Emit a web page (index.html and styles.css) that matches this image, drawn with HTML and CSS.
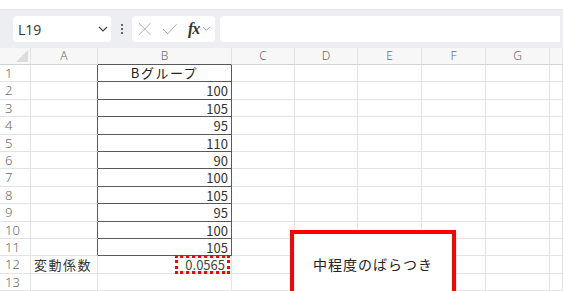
FILE: index.html
```html
<!DOCTYPE html>
<html lang="ja">
<head>
    <meta charset="UTF-8">
    <meta name="viewport" content="width=device-width, initial-scale=1.0">
    <title>変動係数</title>
    <link rel="stylesheet" href="styles.css">
</head>
<body>
    <div class="toolbar">
        <div class="name-box">
            <span>L19</span>
            <svg class="chevron" width="10" height="6" viewBox="0 0 10 6"><path d="M1 1l4 4 4-4" fill="none" stroke="#444" stroke-width="1.2"/></svg>
        </div>
        <div class="grip">
            <svg width="4" height="12" viewBox="0 0 4 12"><circle cx="2" cy="2" r="1.1" fill="#444"/><circle cx="2" cy="6" r="1.1" fill="#444"/><circle cx="2" cy="10" r="1.1" fill="#444"/></svg>
        </div>
        <div class="fx-box">
            <svg width="14" height="14" viewBox="0 0 14 14"><path d="M1 1l12 12M13 1L1 13" fill="none" stroke="#aaa" stroke-width="1"/></svg>
            <svg width="16" height="12" viewBox="0 0 16 12"><path d="M1 6l5 5L15 1" fill="none" stroke="#aaa" stroke-width="1"/></svg>
            <span class="fx">fx</span>
            <svg width="9" height="6" viewBox="0 0 9 6"><path d="M1 1l3.5 3.5L8 1" fill="none" stroke="#999" stroke-width="1"/></svg>
        </div>
        <div class="formula-bar"></div>
    </div>

    <div class="sheet">
        <div class="grid" id="grid"></div>
        <div class="cell-shape">0.0565</div>
        <div class="note">中程度のばらつき</div>
    </div>

    <script>
        const columns = ['A', 'B', 'C', 'D', 'E', 'F', 'G', ''];
        const values = [100, 105, 95, 110, 90, 100, 105, 95, 100, 105];
        const grid = document.getElementById('grid');

        function addCell(className, text) {
            const cell = document.createElement('div');
            cell.className = 'cell ' + className;
            cell.textContent = text || '';
            grid.appendChild(cell);
            return cell;
        }

        // header row
        addCell('corner');
        columns.forEach(col => addCell('col-head' + (col === 'B' ? ' framed-top' : ''), col));

        // rows 1-13
        for (let r = 1; r <= 13; r++) {
            const framed = r <= 11;
            addCell('row-head', r);
            addCell(framed ? 'left-of-frame' : (r === 12 ? 'label' : ''), r === 12 ? '変動係数' : '');
            let text = '';
            let cls = '';
            if (r === 1) { text = 'Bグループ'; cls = 'framed title'; }
            else if (framed) { text = values[r - 2]; cls = 'framed number'; }
            addCell(cls, text);
            for (let c = 2; c < columns.length; c++) addCell('');
        }
    </script>
</body>
</html>
```
FILE: styles.css
```css
:root {
    --grid-line: #e3e3e3;
    --frame-line: #5a5a5a;
    --band-color: #eceef1;
    --head-text: #6a6a6a;
    --cell-text: #333333;
    --accent-red: #ff0000;
}
body {
    margin: 0;
    background-color: #ffffff;
    font-family: "Noto Sans CJK JP", "Noto Sans", sans-serif;
    color: var(--cell-text);
    overflow: hidden;
}
.toolbar {
    margin-top: 9px;
    height: 39px;
    box-sizing: border-box;
    padding: 6px 3px 6px 13px;
    background-color: var(--band-color);
    border-top: 1px solid #e2e4e8;
    display: flex;
    align-items: stretch;
}
.name-box {
    width: 98px;
    box-sizing: border-box;
    background-color: #ffffff;
    border-radius: 4px;
    display: flex;
    align-items: center;
    justify-content: space-between;
    padding: 0 3px 0 5px;
    font-family: "Open Sans", "Noto Sans", sans-serif;
    font-size: 14px;
    color: #333;
}
.grip {
    width: 21px;
    display: flex;
    align-items: center;
    justify-content: center;
}
.fx-box {
    width: 83px;
    box-sizing: border-box;
    background-color: #ffffff;
    border-radius: 4px;
    display: flex;
    align-items: center;
    padding: 0 4px 0 6px;
    gap: 10px;
}
.fx-box svg:last-child {
    margin-left: -7px;
}
.fx {
    font-family: "Liberation Serif", "DejaVu Serif", serif;
    font-style: italic;
    font-weight: bold;
    font-size: 16px;
    color: #333;
    letter-spacing: -1px;
    margin-left: 1px;
}
.formula-bar {
    flex: 1;
    margin-left: 5px;
    background-color: #ffffff;
    border-radius: 4px 0 0 4px;
}
.sheet {
    position: relative;
}
.grid {
    display: grid;
    grid-template-columns: 31px 67px 134px 63px 63px 64px 64px 64px 1fr;
    grid-template-rows: 17px repeat(13, 17.4px);
}
.cell {
    box-sizing: border-box;
    border-right: 1px solid var(--grid-line);
    border-bottom: 1px solid var(--grid-line);
    font-size: 12px;
    line-height: 16px;
    white-space: nowrap;
}
.corner,
.col-head {
    background-color: #f7f7f7;
    border-bottom-color: #d2d2d2;
}
.corner {
    position: relative;
}
.corner::after {
    content: "";
    position: absolute;
    right: 2px;
    bottom: 2px;
    border-left: 12px solid transparent;
    border-bottom: 12px solid #dcdcdc;
}
.col-head {
    text-align: center;
    color: var(--head-text);
    font-family: "Noto Sans", sans-serif;
    font-weight: 300;
}
.col-head.framed-top {
    border-bottom-color: var(--frame-line);
}
.row-head {
    color: var(--head-text);
    padding-left: 5px;
    font-family: "Noto Sans", sans-serif;
    font-weight: 300;
    font-size: 13px;
    line-height: 17px;
}
.left-of-frame {
    border-right: 1px solid var(--frame-line);
}
.framed {
    border-right: 1px solid var(--frame-line);
    border-bottom: 1px solid var(--frame-line);
}
.title {
    text-align: center;
    letter-spacing: 1.5px;
    font-size: 13px;
    line-height: 16px;
    color: #222;
}
.number {
    text-align: right;
    padding-right: 3px;
    font-size: 13px;
    line-height: 17px;
}
.label {
    padding-left: 3px;
    letter-spacing: 1.5px;
    font-size: 13px;
    line-height: 17px;
}
.cell-shape {
    position: absolute;
    left: 175px;
    top: 207px;
    width: 55px;
    height: 19px;
    box-sizing: border-box;
    border: 3px dotted var(--accent-red);
    font-size: 13px;
    line-height: 13px;
    text-align: right;
    padding-right: 2px;
    color: #444;
}
.note {
    position: absolute;
    left: 290px;
    top: 182px;
    width: 166px;
    height: 70px;
    box-sizing: border-box;
    border: 4px solid var(--accent-red);
    background-color: #ffffff;
    font-size: 14px;
    letter-spacing: 1px;
    padding-top: 20px;
    text-align: center;
    color: #222;
}
```
